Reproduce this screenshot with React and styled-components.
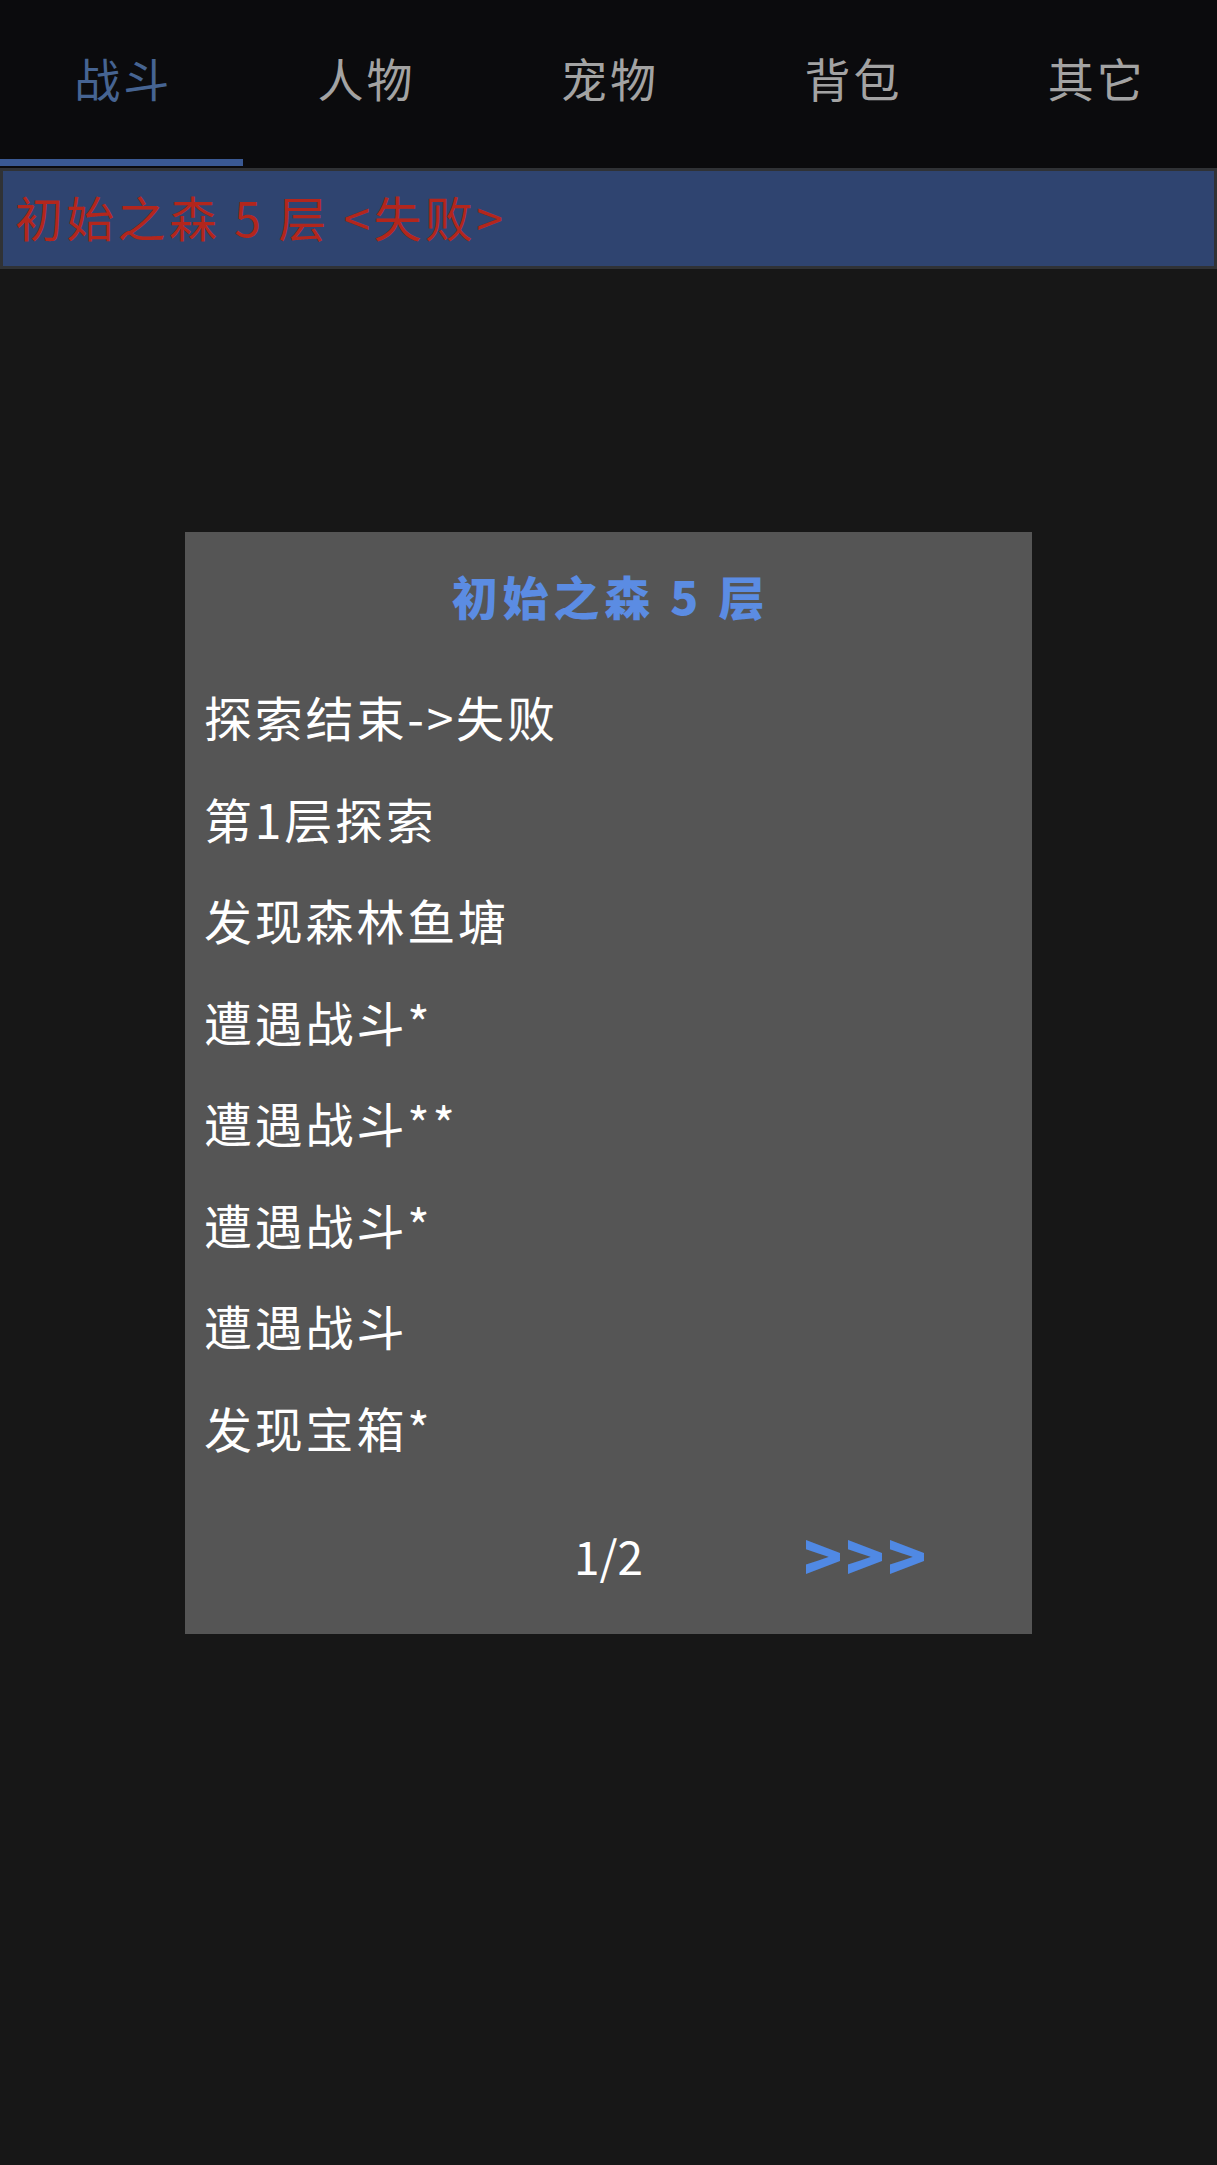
import React from "react";
import styled, { createGlobalStyle } from "styled-components";

const Global = createGlobalStyle`
  html, body {
    margin: 0;
    padding: 0;
    background: #171717;
  }
  body {
    font-family: "Noto Sans CJK SC", "Noto Sans", sans-serif;
  }
  * { box-sizing: border-box; }
`;

const Page = styled.div`
  min-height: 2165px;
  background: #171717;
  display: flex;
  flex-direction: column;
`;

const TabBar = styled.nav`
  background: #0b0b0d;
  display: grid;
  grid-template-columns: repeat(5, 1fr);
  height: 168px;
  padding-bottom: 2px;
`;

const Tab = styled.div`
  display: flex;
  flex-direction: column;
  justify-content: flex-end;
`;

const TabLabel = styled.div`
  height: 159px;
  display: flex;
  align-items: center;
  justify-content: center;
  padding-bottom: 6px;
  padding-left: 3px;
  font-size: 46px;
  color: ${(p) => (p.$active ? "#466492" : "#a3a3a3")};
  letter-spacing: 3px;
`;

const Indicator = styled.div`
  height: 7px;
  background: ${(p) => (p.$active ? "#3a5993" : "transparent")};
`;

const StageBar = styled.div`
  height: 101px;
  background: #2f4470;
  border: 3px solid #303235;
  display: flex;
  align-items: center;
  padding-left: 12px;
  padding-bottom: 6px;
  font-size: 48px;
  color: #b3261c;
  letter-spacing: 3.3px;
  white-space: pre;
`;

const Overlay = styled.div`
  position: fixed;
  inset: 0;
  display: flex;
  align-items: center;
  justify-content: center;
`;

const Dialog = styled.div`
  width: 847px;
  height: 1102px;
  background: #555555;
  display: flex;
  flex-direction: column;
  padding: 13px 19px 36px;
`;

const Title = styled.div`
  height: 100px;
  display: flex;
  align-items: center;
  justify-content: center;
  padding-left: 4px;
  font-size: 46px;
  font-weight: 900;
  color: #5b8ce3;
  letter-spacing: 4.8px;
  white-space: pre;
  margin-bottom: 21px;
`;

const List = styled.div`
  display: flex;
  flex-direction: column;
`;

const Item = styled.div`
  height: 101.5px;
  display: flex;
  align-items: center;
  font-size: 48px;
  color: #ffffff;
  letter-spacing: 2.8px;
`;

const Footer = styled.div`
  margin-top: auto;
  height: 85px;
  display: flex;
  justify-content: center;
  gap: 46px;
`;

const PageNum = styled.div`
  width: 168px;
  display: flex;
  align-items: center;
  justify-content: center;
  font-size: 46px;
  color: #ffffff;
`;

const NavButton = styled.div`
  width: 252px;
  display: flex;
  align-items: center;
  justify-content: center;
  padding-bottom: 4px;
  padding-left: 4px;
  font-size: 64px;
  font-weight: 900;
  color: #5089e4;
  letter-spacing: 3px;
  visibility: ${(p) => (p.$hidden ? "hidden" : "visible")};
`;

const tabs = ["战斗", "人物", "宠物", "背包", "其它"];
const items = [
  "探索结束->失败",
  "第1层探索",
  "发现森林鱼塘",
  "遭遇战斗*",
  "遭遇战斗**",
  "遭遇战斗*",
  "遭遇战斗",
  "发现宝箱*",
];

export default function App() {
  return (
    <Page>
      <Global />
      <TabBar>
        {tabs.map((t, i) => (
          <Tab key={t}>
            <TabLabel $active={i === 0}>{t}</TabLabel>
            <Indicator $active={i === 0} />
          </Tab>
        ))}
      </TabBar>
      <StageBar>{"初始之森 5 层 <失败>"}</StageBar>
      <Overlay>
        <Dialog>
          <Title>{"初始之森 5 层"}</Title>
          <List>
            {items.map((it, i) => (
              <Item key={i}>{it}</Item>
            ))}
          </List>
          <Footer>
            <NavButton $hidden>{"<<<"}</NavButton>
            <PageNum>1/2</PageNum>
            <NavButton>{">>>"}</NavButton>
          </Footer>
        </Dialog>
      </Overlay>
    </Page>
  );
}
